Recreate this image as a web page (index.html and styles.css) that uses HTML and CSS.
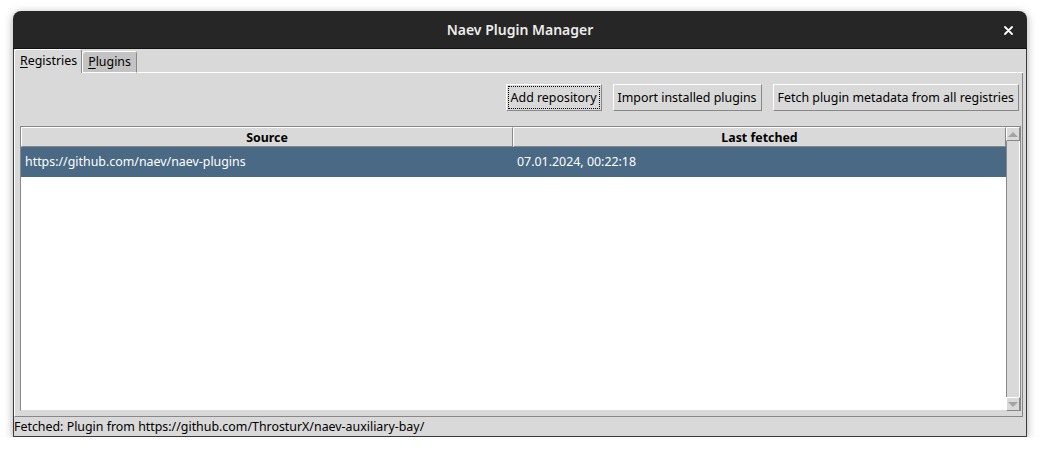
FILE: index.html
```html
<!DOCTYPE html>
<html>
<head>
<meta charset="utf-8">
<link rel="stylesheet" href="styles.css">
</head>
<body>
<div class="window">
  <div class="titlebar">
    <span class="title">Naev Plugin Manager</span>
    <svg class="close" width="9" height="9" viewBox="0 0 9 9"><path d="M1 1 L8 8 M8 1 L1 8" stroke="#ffffff" stroke-width="1.8" stroke-linecap="round"/></svg>
  </div>
  <div class="client">
    <div class="tabs">
      <div class="tab selected"><u>R</u>egistries</div>
      <div class="tab"><u>P</u>lugins</div>
    </div>
    <div class="pane">
      <div class="buttons">
        <button class="btn focus">Add repository</button>
        <button class="btn">Import installed plugins</button>
        <button class="btn">Fetch plugin metadata from all registries</button>
      </div>
      <div class="treewrap">
        <div class="tree">
          <div class="thead">
            <div class="th col1">Source</div>
            <div class="th col2">Last fetched</div>
          </div>
          <div class="row selected">
            <div class="td col1">https://github.com/naev/naev-plugins</div>
            <div class="td col2">07.01.2024, 00:22:18</div>
          </div>
        </div>
        <div class="scrollbar">
          <div class="arrow up"><span class="tri-up"></span></div>
          <div class="trough"></div>
          <div class="arrow down"><span class="tri-down"></span></div>
        </div>
      </div>
    </div>
    <div class="status">Fetched: Plugin from https://github.com/ThrosturX/naev-auxiliary-bay/</div>
  </div>
</div>
</body>
</html>
```
FILE: styles.css
```css
* { box-sizing: border-box; }
html, body { margin: 0; padding: 0; background: #ffffff; }
body { font-family: "Noto Sans", "DejaVu Sans", sans-serif; font-size: 12.4px; color: #000; }

.window {
  margin: 11px 0 0 13px;
  width: 1014px;
  height: 426px;
  border-radius: 8px 8px 0 0;
  box-shadow: 0 2px 8px rgba(0,0,0,0.35);
  display: flex;
  flex-direction: column;
  overflow: hidden;
}

.titlebar {
  height: 38px;
  background: #262626;
  color: #ececec;
  display: flex;
  align-items: center;
  justify-content: center;
  position: relative;
  border-bottom: 1px solid #111;
}
.title { font-size: 14px; font-weight: 600; }
.close {
  position: absolute;
  right: 14px;
  top: 15px;
}

.client {
  flex: 1;
  background: #d9d9d9;
  border: 1px solid #3a3a3a;
  border-top: none;
  display: flex;
  flex-direction: column;
}

.tabs {
  height: 24px;
  display: flex;
  align-items: flex-end;
}
.tab {
  height: 22px;
  padding: 0 5px;
  background: #c3c3c3;
  border-top: 1px solid #ffffff;
  border-left: 1px solid #ffffff;
  border-right: 1px solid #888888;
  border-radius: 3px 3px 0 0;
  line-height: 20px;
  border-bottom: 1px solid #ffffff;
}
.tab.selected {
  background: #d9d9d9;
  height: 24px;
  border-bottom: none;
  line-height: 22px;
  padding: 0 4px 0 5px;
}
.tab u { text-decoration-thickness: 1px; text-underline-offset: 2px; }
.tabs::after {
  content: "";
  flex: 1;
  border-bottom: 1px solid #ffffff;
  margin-right: 3px;
}

.pane {
  height: 344px;
  margin-right: 3px;
  border-left: 1px solid #ffffff;
  border-right: 1px solid #888888;
  border-bottom: 1px solid #888888;
  padding: 11px 1px 4px 5px;
  display: flex;
  flex-direction: column;
}

.buttons {
  display: flex;
  justify-content: flex-end;
  gap: 11px;
  padding-right: 2px;
  height: 27px;
}
.btn {
  font-family: inherit;
  font-size: 12.4px;
  background: #d9d9d9;
  border-top: 1px solid #ffffff;
  border-left: 1px solid #ffffff;
  border-right: 1px solid #888888;
  border-bottom: 1px solid #888888;
  padding: 0 4px 1px;
  height: 27px;
  color: #000;
  margin: 0;
}
.btn.focus {
  outline: 1px dotted #000;
  outline-offset: -3px;
}

.treewrap {
  margin-top: 15px;
  height: 285px;
  display: flex;
}
.tree {
  flex: 1;
  background: #ffffff;
  border-top: 1px solid #888888;
  border-left: 1px solid #888888;
  border-bottom: 1px solid #d9d9d9;
  display: flex;
  flex-direction: column;
}
.thead { display: flex; height: 20px; }
.th {
  background: #d9d9d9;
  border-top: 1px solid #ffffff;
  border-left: 1px solid #ffffff;
  border-right: 1px solid #888888;
  border-bottom: 1px solid #888888;
  font-weight: 700;
  text-align: center;
  line-height: 19px;
}
.col1 { width: 492px; }
.col2 { flex: 1; }
.row { display: flex; height: 30px; align-items: center; padding-bottom: 1px; }
.row.selected { background: #4a6984; color: #ffffff; }
.td { padding-left: 4px; }

.scrollbar {
  width: 15px;
  display: flex;
  flex-direction: column;
  background: #d9d9d9;
  border-top: 1px solid #888888;
  border-right: 1px solid #888888;
}
.arrow {
  height: 14px;
  border-top: 1px solid #ffffff;
  border-left: 1px solid #ffffff;
  border-right: 1px solid #888888;
  border-bottom: 1px solid #888888;
  display: flex;
  align-items: center;
  justify-content: center;
}
.trough {
  flex: 1;
  border-left: 1px solid #888888;
  border-right: 1px solid #ffffff;
}
.tri-up {
  width: 0; height: 0;
  border-left: 5px solid transparent;
  border-right: 5px solid transparent;
  border-bottom: 5px solid #a3a3a3;
}
.tri-down {
  width: 0; height: 0;
  border-left: 5px solid transparent;
  border-right: 5px solid transparent;
  border-top: 5px solid #a3a3a3;
}

.status {
  height: 19px;
  line-height: 19px;
  white-space: nowrap;
}
```
